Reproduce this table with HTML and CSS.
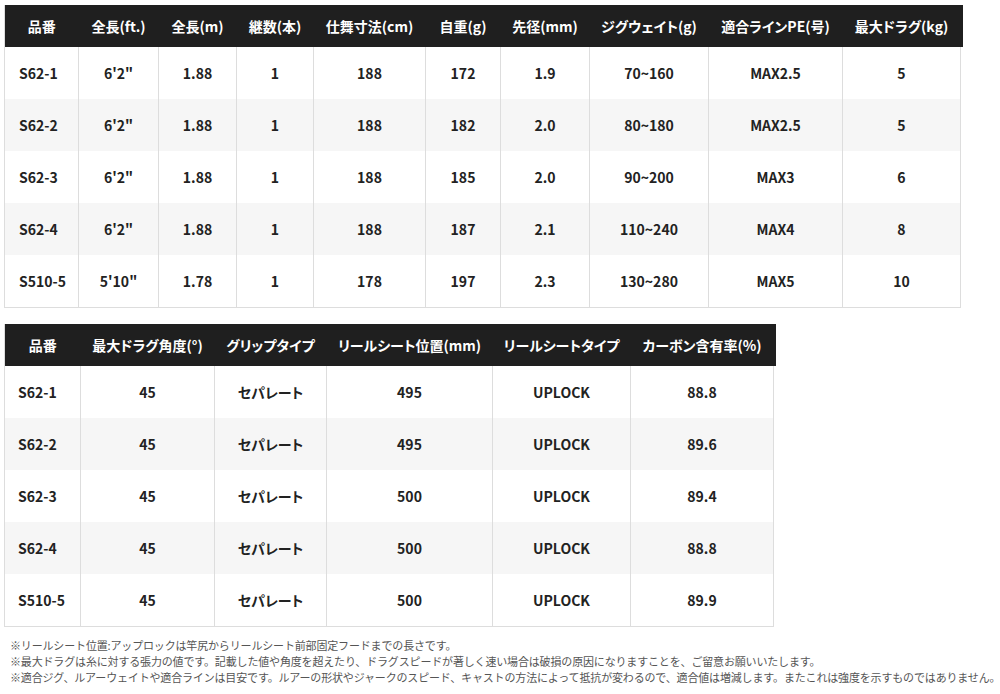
FILE: index.html
```html
<!DOCTYPE html>
<html lang="ja">
<head>
<meta charset="utf-8">
<link rel="stylesheet" href="styles.css">
</head>
<body>
<div class="page">
  <table class="spec spec-main">
    <colgroup>
      <col class="c74"><col class="c80"><col class="c78"><col class="c77"><col class="c112"><col class="c75"><col class="c89"><col class="c119"><col class="c134"><col class="c118">
    </colgroup>
    <thead>
      <tr><th>品番</th><th>全長(ft.)</th><th>全長(m)</th><th>継数(本)</th><th>仕舞寸法(cm)</th><th>自重(g)</th><th>先径(mm)</th><th>ジグウェイト(g)</th><th>適合ラインPE(号)</th><th>最大ドラグ(kg)</th></tr>
    </thead>
    <tbody>
      <tr><td>S62-1</td><td>6'2"</td><td>1.88</td><td>1</td><td>188</td><td>172</td><td>1.9</td><td>70~160</td><td>MAX2.5</td><td>5</td></tr>
      <tr><td>S62-2</td><td>6'2"</td><td>1.88</td><td>1</td><td>188</td><td>182</td><td>2.0</td><td>80~180</td><td>MAX2.5</td><td>5</td></tr>
      <tr><td>S62-3</td><td>6'2"</td><td>1.88</td><td>1</td><td>188</td><td>185</td><td>2.0</td><td>90~200</td><td>MAX3</td><td>6</td></tr>
      <tr><td>S62-4</td><td>6'2"</td><td>1.88</td><td>1</td><td>188</td><td>187</td><td>2.1</td><td>110~240</td><td>MAX4</td><td>8</td></tr>
      <tr><td>S510-5</td><td>5'10"</td><td>1.78</td><td>1</td><td>178</td><td>197</td><td>2.3</td><td>130~280</td><td>MAX5</td><td>10</td></tr>
    </tbody>
  </table>

  <table class="spec spec-sub">
    <colgroup>
      <col class="c76"><col class="c134"><col class="c112"><col class="c166"><col class="c138"><col class="c143">
    </colgroup>
    <thead>
      <tr><th>品番</th><th>最大ドラグ角度(°)</th><th>グリップタイプ</th><th>リールシート位置(mm)</th><th>リールシートタイプ</th><th>カーボン含有率(%)</th></tr>
    </thead>
    <tbody>
      <tr><td>S62-1</td><td>45</td><td>セパレート</td><td>495</td><td>UPLOCK</td><td>88.8</td></tr>
      <tr><td>S62-2</td><td>45</td><td>セパレート</td><td>495</td><td>UPLOCK</td><td>89.6</td></tr>
      <tr><td>S62-3</td><td>45</td><td>セパレート</td><td>500</td><td>UPLOCK</td><td>89.4</td></tr>
      <tr><td>S62-4</td><td>45</td><td>セパレート</td><td>500</td><td>UPLOCK</td><td>88.8</td></tr>
      <tr><td>S510-5</td><td>45</td><td>セパレート</td><td>500</td><td>UPLOCK</td><td>89.9</td></tr>
    </tbody>
  </table>

  <div class="notes">
    <p>※リールシート位置:アップロックは竿尻からリールシート前部固定フードまでの長さです。</p>
    <p>※最大ドラグは糸に対する張力の値です。記載した値や角度を超えたり、ドラグスピードが著しく速い場合は破損の原因になりますことを、ご留意お願いいたします。</p>
    <p>※適合ジグ、ルアーウェイトや適合ラインは目安です。ルアーの形状やジャークのスピード、キャストの方法によって抵抗が変わるので、適合値は増減します。またこれは強度を示すものではありません。</p>
  </div>
</div>
</body>
</html>
```

FILE: styles.css
```css
html, body {
  margin: 0;
  padding: 0;
  background: #ffffff;
}

.page {
  padding: 5px 0 0 4px;
  font-family: "Noto Sans CJK JP", "Noto Sans", sans-serif;
  color: #222222;
}

.spec {
  border-collapse: collapse;
  table-layout: fixed;
  border-left: 1px solid #dddddd;
  font-feature-settings: "palt";
}

.spec-main {
  width: 957px;
}

.spec-sub {
  width: 770px;
  margin-top: 16px;
}

.c74 { width: 74px; }
.c75 { width: 75px; }
.c76 { width: 76px; }
.c77 { width: 77px; }
.c78 { width: 78px; }
.c80 { width: 80px; }
.c89 { width: 89px; }
.c112 { width: 112px; }
.c118 { width: 118px; }
.c119 { width: 119px; }
.c134 { width: 134px; }
.c138 { width: 138px; }
.c143 { width: 143px; }
.c166 { width: 166px; }

.spec th {
  height: 42px;
  padding: 0;
  background: #1f1f1f;
  color: #ffffff;
  font-size: 14px;
  font-weight: 700;
  text-align: center;
  vertical-align: middle;
  white-space: nowrap;
  border: none;
}

.spec th:last-child {
  box-shadow: 2px 0 0 #1f1f1f;
}

.spec td {
  height: 52px;
  padding: 0;
  font-size: 14px;
  font-weight: 700;
  text-align: center;
  vertical-align: middle;
  border-left: 1px solid #dddddd;
  border-right: 1px solid #dddddd;
  white-space: nowrap;
}

.spec td:first-child {
  text-align: left;
  padding-left: 14px;
}

.spec-sub td:first-child {
  padding-left: 13px;
}

.spec tbody tr:nth-child(even) td {
  background: #f6f6f6;
}

.spec tbody tr:last-child td {
  border-bottom: 1px solid #dddddd;
}

.notes {
  margin-top: 10px;
  padding-left: 6px;
  font-size: 11px;
  line-height: 16px;
  letter-spacing: -0.16px;
  color: #555555;
}

.notes p {
  margin: 0;
  white-space: nowrap;
}
```
